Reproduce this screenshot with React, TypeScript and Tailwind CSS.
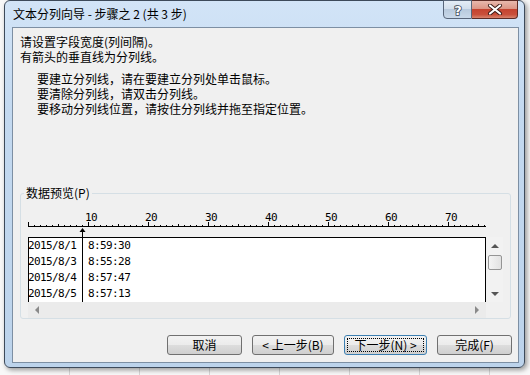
import React from "react";

const cjk = { fontFamily: '"Noto Sans CJK SC", "Noto Sans", sans-serif' };
const mono = { fontFamily: '"DejaVu Sans Mono", "Liberation Mono", monospace' };

const rows = [
  ["2015/8/1", "8:59:30"],
  ["2015/8/3", "8:55:28"],
  ["2015/8/4", "8:57:47"],
  ["2015/8/5", "8:57:13"],
];

function Ruler() {
  const ticks = Array.from({ length: 77 }, (_, i) => i);
  const nums = [10, 20, 30, 40, 50, 60, 70];
  return (
    <svg width="462" height="31" className="block">
      {ticks.map((i) => {
        const h = i % 10 === 0 ? 4 : i % 5 === 0 ? 2 : 1;
        return <rect key={i} x={i * 6} y={20 - h} width={1} height={h} fill="#000" />;
      })}
      <rect x={0} y={20} width={458} height={1} fill="#000" />
      {nums.map((n) => (
        <text
          key={n}
          x={n * 6 - 3}
          y={15}
          fontSize="11"
          letterSpacing="-0.6"
          fill="#000"
          style={mono}
        >
          {n}
        </text>
      ))}
      <polygon points="54.5,22 51.5,26 57.5,26" fill="#000" />
      <rect x={54} y={26} width={1} height={5} fill="#000" />
    </svg>
  );
}

function Btn({ children, w, def }: { children: React.ReactNode; w: string; def?: boolean }) {
  return (
    <div
      className={`${w} h-[20px] rounded-[3px] border ${
        def ? "border-[#3c7fb1]" : "border-[#707070]"
      } bg-[linear-gradient(180deg,#f2f2f2_0%,#ebebeb_50%,#dddddd_50%,#cfcfcf_100%)] flex items-center justify-center p-[2px]`}
    >
      {def ? (
        <div className="w-full h-full border border-dotted border-black flex items-center justify-center text-[12px] leading-[14px] text-black">
          {children}
        </div>
      ) : (
        <span className="text-[12px] leading-[14px] text-black">{children}</span>
      )}
    </div>
  );
}

export default function App() {
  return (
    <div
      className="w-[530px] h-[375px] overflow-hidden bg-[repeating-linear-gradient(90deg,#f8f8f8_0px,#f8f8f8_69px,#d6d6d6_69px,#d6d6d6_70px)]"
      style={cjk}
    >
      <div className="ml-[4px] w-[521px] h-[368px] rounded-[6px] border border-[#3d4a5a] bg-[linear-gradient(180deg,#d2e4f7_0%,#c3d9f0_30%,#bcd3eb_100%)] shadow-[2px_2px_5px_rgba(0,0,0,0.4)] flex flex-col">
        {/* Title bar */}
        <div className="h-[26px] flex items-start shrink-0">
          <span className="ml-[8px] mt-[5px] text-[12px] leading-[15px] text-black">
            文本分列向导 - 步骤之 2 (共 3 步)
          </span>
          <div className="ml-auto mr-[6px] -mt-[1px] flex">
            <div className="w-[29px] h-[19px] rounded-bl-[4px] border border-[#58667a] bg-[linear-gradient(180deg,#e4edf6_0%,#d3dfec_45%,#b8cadd_50%,#c9d9ea_100%)] flex items-center justify-center">
              <svg width="12" height="13" viewBox="0 0 12 13">
                <text
                  x="6"
                  y="11.5"
                  textAnchor="middle"
                  fontSize="13"
                  fontWeight="bold"
                  fill="#fff"
                  stroke="#3b4656"
                  strokeWidth="1.6"
                  paintOrder="stroke"
                  style={{ fontFamily: '"DejaVu Sans", sans-serif' }}
                >
                  ?
                </text>
              </svg>
            </div>
            <div className="w-[46px] h-[19px] rounded-br-[4px] border border-l-0 border-[#5c2a24] bg-[linear-gradient(180deg,#e8b8ad_0%,#dc9686_45%,#c5432f_50%,#c9503b_80%,#d8846e_100%)] flex items-center justify-center">
              <svg width="16" height="11" viewBox="0 0 16 11">
                <path d="M3 1.5 L13 9.5 M13 1.5 L3 9.5" stroke="#3a1a16" strokeWidth="4" strokeLinecap="round" />
                <path d="M3 1.5 L13 9.5 M13 1.5 L3 9.5" stroke="#fff" strokeWidth="2.2" strokeLinecap="round" />
              </svg>
            </div>
          </div>
        </div>

        {/* Client area */}
        <div className="ml-[7px] mr-[5px] mb-[4px] flex-1 border border-[#7d8fa3] bg-[#f0f0f0] flex flex-col text-[12px] text-black">
          <div className="pl-[7px] pt-[6px] leading-[15px]">
            <div>请设置字段宽度(列间隔)。</div>
            <div>有箭头的垂直线为分列线。</div>
          </div>
          <div className="pl-[24px] mt-[7px] leading-[15px]">
            <div>要建立分列线，请在要建立分列处单击鼠标。</div>
            <div>要清除分列线，请双击分列线。</div>
            <div>要移动分列线位置，请按住分列线并拖至指定位置。</div>
          </div>

          {/* Group box */}
          <div className="relative mt-[77px] mx-[7px] h-[126px] rounded-[3px] border border-[#d5dfe5]">
            <span className="absolute left-[3px] -top-[9px] px-[2px] bg-[#f0f0f0] leading-[15px]">
              数据预览(P)
            </span>
            <div className="pl-[7px] pt-[12px]">
              <Ruler />
              <div className="flex">
                <div className="flex flex-col">
                  <div className="relative w-[458px] h-[65px] border-l border-t border-r border-black bg-white overflow-hidden">
                    <div className="absolute left-[53px] top-0 bottom-0 w-[1px] bg-black" />
                    {rows.map(([a, b]) => (
                      <div
                        key={a}
                        className="flex h-[16px] leading-[16px] text-[11px] tracking-[-0.6px] -ml-[1px]"
                        style={mono}
                      >
                        <span className="w-[60px] shrink-0">{a}</span>
                        <span>{b}</span>
                      </div>
                    ))}
                  </div>
                  <div className="w-[458px] h-[16px] bg-[#ebebeb] flex items-center justify-between px-[7px]">
                    <svg width="5" height="8" viewBox="0 0 5 8">
                      <polygon points="0,4 4,0 4,8" fill="#8a8a8a" />
                    </svg>
                    <svg width="5" height="8" viewBox="0 0 5 8">
                      <polygon points="5,4 1,0 1,8" fill="#8a8a8a" />
                    </svg>
                  </div>
                </div>
                <div className="w-[17px] h-[65px] bg-[#f2f2f2] flex flex-col items-center">
                  <div className="h-[18px] flex items-center justify-center">
                    <svg width="8" height="5" viewBox="0 0 8 5">
                      <polygon points="4,0 0,4 8,4" fill="#555" />
                    </svg>
                  </div>
                  <div className="w-[14px] h-[15px] rounded-[2px] border border-[#959595] bg-[linear-gradient(90deg,#f4f4f4,#e2e2e2)]" />
                  <div className="flex-1 flex items-end justify-center pb-[5px]">
                    <svg width="8" height="5" viewBox="0 0 8 5">
                      <polygon points="0,0 8,0 4,4" fill="#555" />
                    </svg>
                  </div>
                </div>
              </div>
            </div>
          </div>

          {/* Buttons */}
          <div className="mt-[16px] pr-[6px] flex justify-end gap-[10px]">
            <Btn w="w-[75px]">取消</Btn>
            <Btn w="w-[82px]">&lt; 上一步(B)</Btn>
            <Btn w="w-[83px]" def>
              下一步(N) &gt;
            </Btn>
            <Btn w="w-[75px]">完成(F)</Btn>
          </div>
        </div>
      </div>
    </div>
  );
}
